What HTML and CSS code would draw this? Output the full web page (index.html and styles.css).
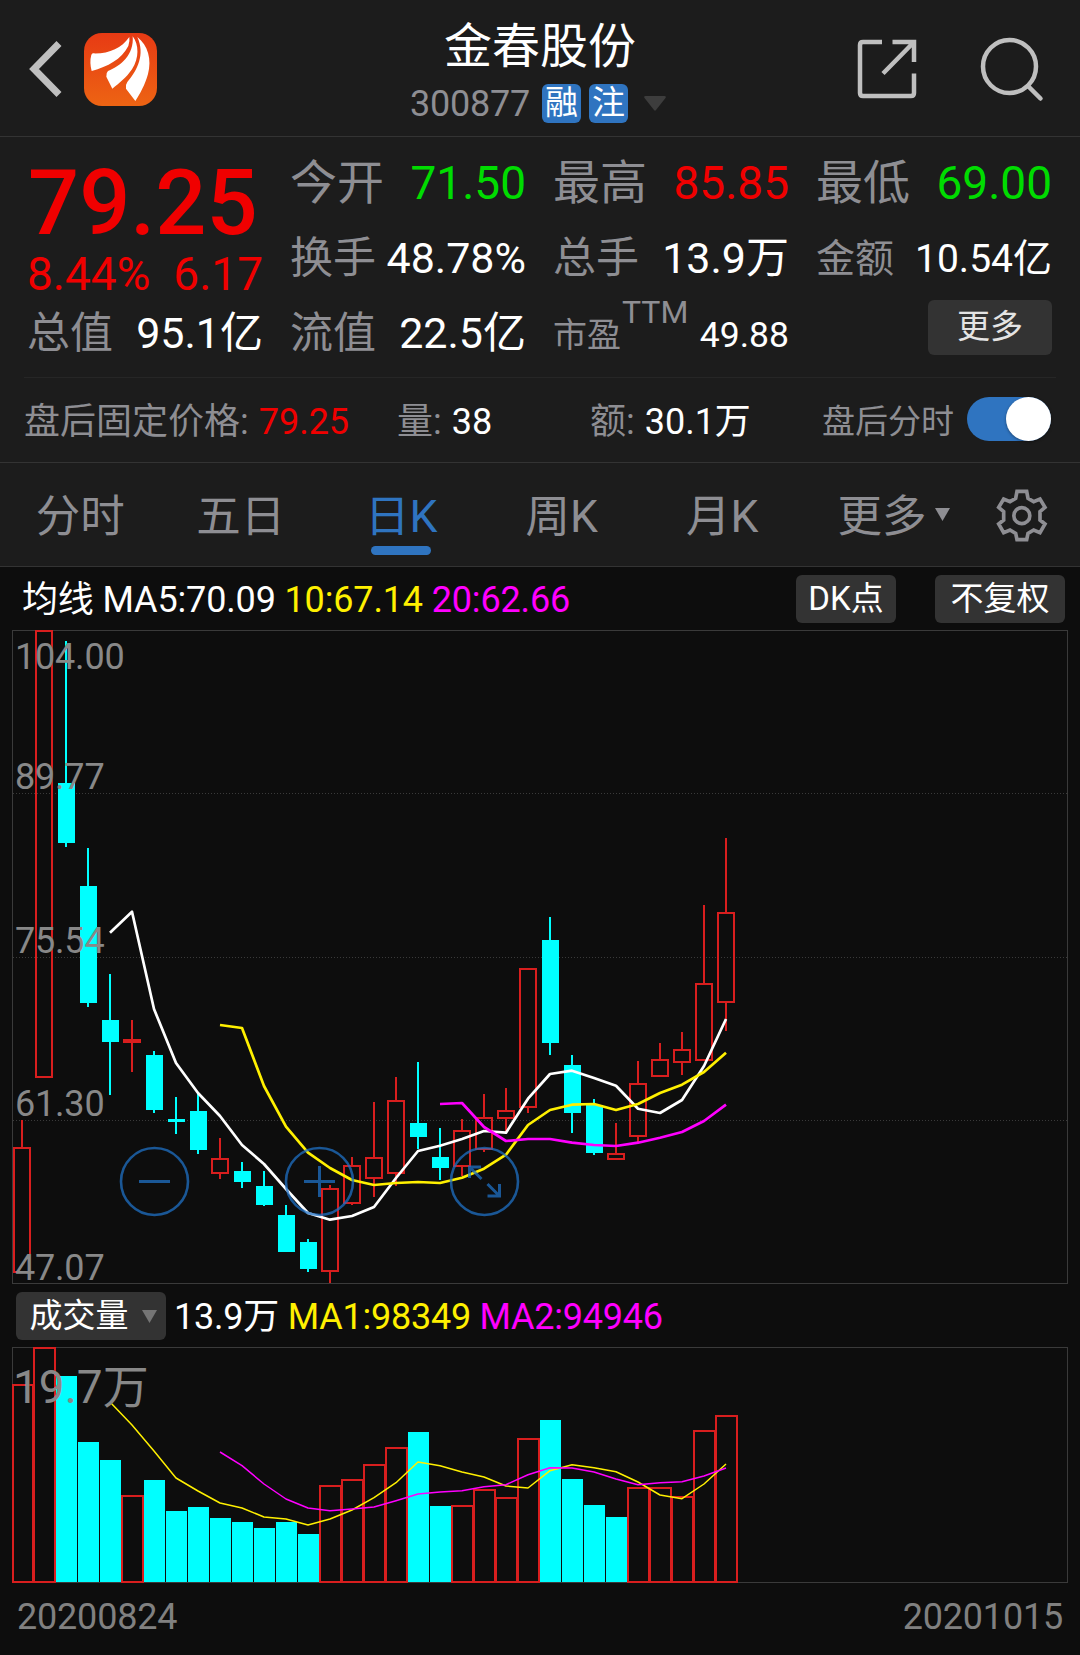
FILE: index.html
```html
<!DOCTYPE html>
<html lang="zh-CN">
<head>
<meta charset="utf-8">
<title>金春股份 300877</title>
<link rel="stylesheet" href="styles.css">
</head>
<body>
<header class="header">
  <div class="header-left">
    <svg class="back" width="34" height="56" viewBox="0 0 34 56"><path d="M31 2.500 L6 28 L31 53.500"/></svg>
    <svg class="logo" width="73" height="73" viewBox="12 15 219 219">
      <defs><linearGradient id="logo-bg" x1="0" y1="0" x2="0" y2="1"><stop offset="0" stop-color="#e73a14"/><stop offset="1" stop-color="#ed6413"/></linearGradient></defs>
      <rect x="12" y="15" width="219" height="219" rx="54" fill="url(#logo-bg)"/>
      <g fill="#fff">
        <path d="M38 76 C85 78 124 62 148 27 Q150 40 145 54 C124 95 84 115 35 129 Q28 102 34 80 Z"/>
        <path d="M158 25 C177 50 178 90 156 124 C138 150 118 165 97 182 L79 146 Q78 134 84 129 C122 115 163 80 158 25 Z"/>
        <path d="M172 27 C204 52 216 95 204 138 C195 170 180 198 166 219 L138 182 Q136 170 142 162 C172 127 196 80 172 27 Z"/>
      </g>
    </svg>
  </div>
  <div class="header-title">
    <div class="name">金春股份</div>
    <div class="code"><span class="num">300877</span><span class="tag first">融</span><span class="tag">注</span><svg class="drop" width="22" height="15" viewBox="0 0 22 15"><path d="M1.500 0 H20.500 Q22.500 0 21.500 2 L12 14 Q11 15.500 10 14 L0.500 2 Q-.5 0 1.500 0Z" fill="#3d3d3d"/></svg></div>
  </div>
  <div class="header-right">
    <svg class="share" width="60" height="60" viewBox="0 0 60 60"><path d="M25 3 H6 Q3 3 3 6 V54 Q3 57 6 57 H54 Q57 57 57 54 V34.500 M35.500 3 H57 V23 M57 3 L26 34.500"/></svg>
    <svg class="search" width="66" height="68" viewBox="0 0 66 68"><circle cx="30.500" cy="30.500" r="26.500"/><path d="M49 50 L61.500 62.500"/></svg>
  </div>
</header>

<section class="quote">
  <div class="price up"><div class="last">79.25</div><div class="change"><span>8.44%</span><span>6.17</span></div></div>
  <div class="cell s46"><label>今开</label><b class="down">71.50</b></div>
  <div class="cell s46"><label>最高</label><b class="up">85.85</b></div>
  <div class="cell s46"><label>最低</label><b class="down">69.00</b></div>
  <div class="cell s43"><label>换手</label><b>48.78%</b></div>
  <div class="cell s43"><label>总手</label><b>13.9万</b></div>
  <div class="cell s39"><label>金额</label><b>10.54亿</b></div>
  <div class="cell s43"><label>总值</label><b>95.1亿</b></div>
  <div class="cell s43"><label>流值</label><b>22.5亿</b></div>
  <div class="cell s35"><label>市盈<span class="ttm">TTM</span></label><b>49.88</b></div>
  <div class="more-cell"><span class="btn more-btn">更多</span></div>
</section>

<section class="after">
  <div><label>盘后固定价格:</label> <b class="up">79.25</b></div>
  <div><label>量:</label> <b>38</b></div>
  <div><label>额:</label> <b>30.1万</b></div>
  <div class="switch-cell"><label>盘后分时</label><span class="switch"><i></i></span></div>
</section>

<nav class="tabs">
  <span class="tab">分时</span>
  <span class="tab">五日</span>
  <span class="tab active">日K</span>
  <span class="tab">周K</span>
  <span class="tab">月K</span>
  <span class="tab-more">更多<svg width="15" height="13" viewBox="0 0 15 13"><path d="M0 0H15L7.500 13Z" fill="#8e8e93"/></svg></span>
  <svg class="gear" width="64" height="64" viewBox="0 0 192 192"><path d="M81 22 H110 L114 43 L131 53 L150 45 L165 70 L150 83 V108 L165 120 L150 146 L131 138 L114 148 L110 167 H81 L77 148 L60 138 L41 146 L26 120 L41 108 V83 L26 70 L41 45 L60 53 L77 43Z"/><circle cx="95.500" cy="95" r="24"/></svg>
</nav>

<div class="legend">
  <div class="legend-text">均线 MA5:70.09 <span class="yellow">10:67.14</span> <span class="magenta">20:62.66</span></div>
  <span class="btn dk">DK点</span><span class="btn adj">不复权</span>
</div>
<svg id="kline" class="chart" width="1080" height="654" viewBox="0 630 1080 654"></svg>

<div class="legend volume-legend">
  <span class="btn vol">成交量<svg width="15" height="13" viewBox="0 0 15 13"><path d="M0 0H15L7.500 13Z" fill="#757575"/></svg></span>
  <div class="legend-text">13.9万 <span class="yellow">MA1:98349</span> <span class="magenta">MA2:94946</span></div>
</div>
<svg id="volume" class="chart" width="1080" height="236" viewBox="0 1347 1080 236"></svg>

<footer class="dates"><span>20200824</span><span>20201015</span></footer>
<script src="chart.js"></script>
</body>
</html>
```
FILE: styles.css
```css
* { box-sizing: border-box; }
body {
  margin: 0;
  width: 1080px;
  height: 1655px;
  overflow: hidden;
  background: #0d0d0d;
  color: #fff;
  font-family: Roboto, "Noto Sans CJK SC", sans-serif;
}
svg { display: block; flex: none; }
b { font-weight: 400; }
label { color: #8e8e93; }
.up { color: #f00000; }
.down { color: #00dc00; }
.yellow { color: #fff000; }
.magenta { color: #ff00ff; }

.header {
  display: grid;
  grid-template-columns: 400px 280px 1fr;
  height: 137px;
  background: #1c1c1c;
  border-bottom: 1px solid #333;
}
.header-left { display: flex; padding: 33px 0 0 28px; }
.back { margin: 8px 22px 0 0; fill: none; stroke: #bfbfbf; stroke-width: 7; }
.header-title { padding-top: 15px; text-align: center; }
.name { font-size: 48px; line-height: 64px; }
.code {
  display: flex;
  justify-content: center;
  align-items: center;
  height: 48px;
  padding-right: 4px;
  color: #8e8e93;
  font-size: 36px;
  line-height: 46px;
}
.num { padding-top: 2px; letter-spacing: -.2px; }
.tag {
  width: 39px;
  height: 39px;
  margin-left: 8px;
  border-radius: 6px;
  background: #2f74c0;
  color: #fff;
  font-size: 33px;
  line-height: 37px;
  text-align: center;
}
.tag.first { margin-left: 12px; }
.drop { margin-left: 16px; }
.header-right { display: flex; padding: 36px 0 0 177px; }
.header-right svg { fill: none; stroke: #bfbfbf; stroke-width: 4.5; }
.share { margin-top: 3px; }
.search { margin-left: 62px; stroke-linecap: round; }

.quote {
  display: grid;
  grid-template-columns: repeat(4, 235px);
  grid-template-rows: 75px 75px 74px;
  column-gap: 28px;
  height: 240px;
  padding: 9px 28px 0;
  background: #1c1c1c;
}
.price { grid-row: 1 / 3; white-space: nowrap; }
.last { padding-top: 1px; font-size: 90px; font-weight: 500; line-height: 113px; }
.change { display: flex; justify-content: space-between; margin-left: -1px; font-size: 46px; line-height: 29px; }
.cell { display: flex; justify-content: space-between; align-items: baseline; line-height: 75px; white-space: nowrap; }
.cell label { margin-left: -1px; }
.s46 { font-size: 46px; }
.s46 label { font-size: 47px; line-height: 74px; }
.s43 { font-size: 43px; line-height: 74px; }
.s39 { padding-top: 1px; font-size: 39px; }
.s35 { padding-top: 2px; font-size: 35.5px; }
.s35 label { font-size: 34px; }
.ttm { margin-left: 1px; font-size: 32px; line-height: 0; vertical-align: 24px; }
.btn { display: block; border-radius: 6px; background: #333; font-size: 33px; text-align: center; }
.more-cell { display: flex; justify-content: flex-end; padding-top: 4px; }
.more-btn { width: 124px; height: 55px; color: #e4e4e4; line-height: 53px; }

.after {
  position: relative;
  display: grid;
  grid-template-columns: 373px 193px 232px 1fr;
  height: 86px;
  padding: 3px 0 0 24px;
  background: #1c1c1c;
  border-bottom: 1px solid #333;
  font-size: 36px;
  line-height: 84px;
}
.after b { margin-left: 1px; }
.after::before { content: ""; position: absolute; top: 0; left: 24px; right: 24px; height: 1px; background: #262626; }
.switch-cell { display: flex; }
.switch-cell label { font-size: 33px; }
.switch { width: 84px; height: 44px; margin: 17px 0 0 13px; border-radius: 22px; background: #2f74c0; }
.switch i { display: block; width: 45px; height: 44px; margin-left: 39px; border-radius: 50%; background: #fff; box-shadow: 0 1px 3px rgba(0, 0, 0, .4); }

.tabs {
  display: flex;
  height: 104px;
  background: #1c1c1c;
  border-bottom: 1px solid #333;
  color: #8e8e93;
  font-size: 44.500px;
  line-height: 108px;
}
.tab { width: 160.5px; text-align: center; }
.active { position: relative; color: #2f74c0; }
.active::after { content: ""; position: absolute; left: 50px; top: 83px; width: 60px; height: 9px; border-radius: 5px; background: #2f74c0; }
.tab-more { display: flex; width: 187px; padding-left: 35px; }
.tab-more svg { margin: 45px 0 0 8px; }
.gear { margin-top: 21px; fill: none; stroke: #8e8e93; stroke-width: 11; }

.legend { display: flex; align-items: center; height: 63px; padding: 0 15px 0 22px; }
.legend-text { padding-top: 2px; font-size: 36px; line-height: 60px; letter-spacing: -.15px; white-space: nowrap; }
.legend .btn { height: 48px; line-height: 47px; }
.dk { width: 100px; margin-left: auto; }
.adj { width: 130px; margin-left: 39px; }
.volume-legend { padding-left: 15.500px; }
.volume-legend .legend-text { letter-spacing: -.24px; }
.vol { display: flex; width: 150px; padding-left: 14px; margin-right: 8.500px; }
.vol svg { margin: 18px 0 0 13px; }

.chart { overflow: visible; }
.chart text { fill: #888; font-size: 36px; letter-spacing: -.2px; }
.chart .volume-max { font-size: 46px; letter-spacing: 0; }
.frame { fill: none; stroke: #3a3a3a; }
.grid { stroke: #3a3a3a; stroke-dasharray: 1 2; }
.rise { fill: none; stroke: #d81e1e; stroke-width: 2; }
.fall { fill: #00ffff; }
.line { fill: none; stroke-width: 2.7; stroke-linejoin: round; }
.thin { stroke-width: 1.5; }
.control { fill: none; stroke: #1f70c4; stroke-width: 2.6; opacity: .75; }
.control path { stroke-width: 3; }

.dates { display: flex; justify-content: space-between; height: 72px; padding: 0 17px; color: #808080; font-size: 36px; line-height: 68px; letter-spacing: -.2px; }
```
FILE: chart.js
```
// [rise, high, bodyTop, bodyBottom, low, volumeTop, volumeFilled] for each session, in chart units
const sessions = [
  [1,1120,1147,1273,1273,1384],[1,630,630,1078,1078,1347],[0,641,783,843,847,1376],
  [0,848,886,1003,1007,1442],[0,974,1020,1042,1095,1460],[1,1020,1039,1043,1072,1495],
  [0,1051,1055,1110,1113,1480],[0,1097,1119,1122,1134,1511],[0,1093,1111,1150,1154,1507],
  [1,1138,1158,1174,1179,1518,1],[0,1162,1171,1182,1188,1522],[0,1171,1186,1205,1206,1528],
  [0,1205,1215,1252,1252,1522],[0,1239,1242,1269,1272,1534],[1,1185,1188,1272,1283,1485],
  [1,1157,1165,1204,1205,1479],[1,1102,1157,1179,1197,1464],[1,1077,1100,1174,1186,1447],
  [0,1062,1123,1137,1149,1432],[0,1128,1157,1168,1180,1506],[1,1119,1130,1167,1176,1505],
  [1,1094,1117,1150,1152,1489],[1,1088,1110,1119,1133,1497],[1,968,968,1108,1113,1438],
  [0,917,940,1043,1055,1420],[0,1055,1065,1113,1133,1479],[0,1099,1105,1153,1155,1505],
  [1,1123,1153,1160,1160,1517,1],[1,1061,1083,1137,1143,1487],[1,1043,1059,1077,1077,1487],
  [1,1032,1049,1063,1075,1496],[1,905,983,1061,1061,1430],[1,838,912,1003,1031,1415]
];
const x = i => 22 + 22 * i;
const line = (start, ys, color, cls) =>
  `<polyline class="line ${cls}" stroke="${color}" points="${ys.map((y, k) => x(start + k) + ',' + y).join(' ')}"/>`;

let k = '<rect class="frame" x="12.5" y="630.5" width="1055" height="653"/>';
for (const y of [793, 957, 1120]) k += `<path class="grid" d="M13 ${y + .5}H1067"/>`;
sessions.forEach(([rise, hi, top, bottom, lo], i) => {
  const c = x(i);
  if (rise) {
    k += `<path class="rise" d="M${c} ${hi}V${top}M${c} ${bottom}V${lo}"/>`;
    k += `<rect class="rise" x="${c - 8}" y="${top + 1}" width="16" height="${bottom - top - 2}"/>`;
  } else {
    k += `<rect class="fall" x="${c - 1}" y="${hi}" width="2" height="${lo - hi}"/>`;
    k += `<rect class="fall" x="${c - 8}" y="${top}" width="17" height="${bottom - top}"/>`;
  }
});
k += line(4, [932.7,911.7,1009,1063,1093,1116,1145,1164,1189,1213,1219.7,1216,1207,1178,1151,1145.7,1139,1131,1132.7,1098.7,1074,1070.7,1078,1085.7,1108.7,1113,1100,1066,1019], '#fff', '');
k += line(9, [1025,1028,1086,1126.7,1152.7,1168,1180,1185,1183,1182,1183,1177.7,1168.7,1154.7,1125,1110,1104.7,1104,1110,1104,1093,1084.7,1072,1052.7], '#fff000', '');
k += line(19, [1104,1103,1127,1141,1139,1139,1142.7,1145,1146,1142.7,1137.7,1132,1121,1104.7], '#ff00ff', '');
[[669, '104.00'], [788.7, '89.77'], [952.7, '75.54'], [1115.7, '61.30'], [1280, '47.07']]
  .forEach(([y, t]) => { k += `<text x="15" y="${y}">${t}</text>`; });
const glyphs = [
  [154.5, 'M139 1181.5H170'],
  [319.5, 'M304 1181.5H335M319.5 1166V1197'],
  [484.5, 'M469.5 1178V1167H481M470 1167.500L481.500 1179M487.500 1196H499.500V1184M487.500 1184L499 1195.500']
];
for (const [cx, d] of glyphs) k += `<g class="control"><circle cx="${cx}" cy="1181.5" r="33.5"/><path d="${d}"/></g>`;
document.getElementById('kline').innerHTML = k;

let v = '<rect class="frame" x="12.5" y="1347.5" width="1055" height="235"/>';
sessions.forEach(([rise, , , , , top, filled], i) => {
  const c = x(i);
  const inset = i ? 10 : 9;
  v += rise && !filled
    ? `<rect class="rise" x="${c - inset}" y="${top + 1}" width="${11 + inset}" height="${1581 - top}"/>`
    : `<rect class="fall" x="${c - 10}" y="${top}" width="21" height="${1582 - top}"/>`;
});
v += line(4, [1402,1425,1451,1478,1491,1503,1508,1517,1519,1525,1519,1510,1497.7,1482.7,1462,1465.7,1472,1477,1486,1488,1470.7,1464.7,1467.7,1471.7,1482,1495,1498.7,1484,1464], '#fff000', 'thin');
v += line(9, [1452,1465.7,1484,1499,1508,1510.7,1509,1507,1500.7,1494,1492,1490.7,1486.7,1484.7,1474.7,1467.7,1468,1472,1479,1484.7,1482.7,1481.7,1476,1468], '#ff00ff', 'thin');
v += '<text class="volume-max" x="13" y="1403">19.7万</text>';
document.getElementById('volume').innerHTML = v;
```
